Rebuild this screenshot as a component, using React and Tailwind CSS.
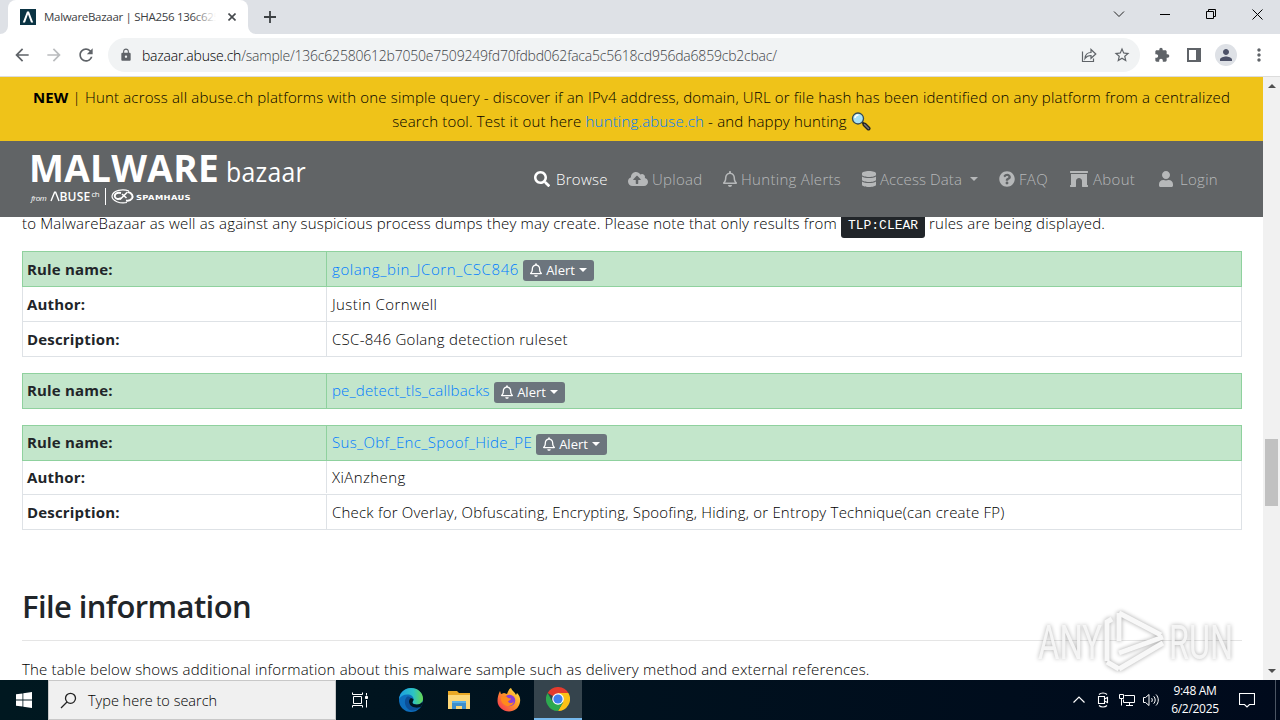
import React from "react";
import {
  FaArchway,
  FaCloudUploadAlt,
  FaDatabase,
  FaQuestionCircle,
  FaRegBell,
  FaSearch,
  FaUser,
} from "react-icons/fa";
import {
  MdArrowBack,
  MdArrowForward,
  MdExtension,
  MdLock,
  MdMoreVert,
  MdPerson,
  MdRefresh,
  MdStarBorder,
} from "react-icons/md";

const RULES = [
  {
    name: "golang_bin_JCorn_CSC846",
    nameClass: "w-[187px] tracking-[0.6px]",
    shift: "",
    rows: [
      { label: "Author:", value: "Justin Cornwell", rowClass: "h-[35px] tracking-[0.4px]" },
      { label: "Description:", value: "CSC-846 Golang detection ruleset", rowClass: "h-[35px] tracking-[0.28px]" },
    ],
  },
  { name: "pe_detect_tls_callbacks", nameClass: "w-[158px]", shift: "pb-[2px]", rows: [] },
  {
    name: "Sus_Obf_Enc_Spoof_Hide_PE",
    nameClass: "w-[200px] tracking-[0.34px]",
    shift: "pb-[2px]",
    rows: [
      { label: "Author:", value: "XiAnzheng", rowClass: "h-[34px] pb-px tracking-[0.4px]" },
      {
        label: "Description:",
        value: "Check for Overlay, Obfuscating, Encrypting, Spoofing, Hiding, or Entropy Technique(can create FP)",
        rowClass: "h-[35px] tracking-[0.21px]",
      },
    ],
  },
];

const TabStrip = () => (
  <div className="h-[34px] shrink-0 bg-[#dee1e6] flex items-end">
    <div className="relative ml-2 w-[240px] h-[34px] bg-white rounded-t-lg flex items-center pl-3">
      <svg className="absolute -left-2 bottom-0" width="8" height="8">
        <path d="M8 0v8H0a8 8 0 0 0 8-8z" fill="#fff" />
      </svg>
      <svg className="absolute -right-2 bottom-0" width="8" height="8">
        <path d="M0 0v8h8a8 8 0 0 1-8-8z" fill="#fff" />
      </svg>
      <svg width="16" height="16" viewBox="0 0 16 16" className="shrink-0">
        <rect width="16" height="16" fill="#0b3444" />
        <path d="M2.800 13.500 7 2.500h2l4.200 11h-2.200L8 5.300 5 13.500z" fill="#fff" />
      </svg>
      <div className="relative ml-2 w-[172px] h-5 leading-5 overflow-hidden whitespace-nowrap text-[11.5px] tracking-[-0.3px] text-[#3c4043]">
        MalwareBazaar | SHA256 136c625
        <div className="absolute right-0 top-0 h-full w-6 bg-linear-to-r from-white/0 to-white" />
      </div>
      <svg width="8" height="8" viewBox="0 0 8 8" className="ml-3" stroke="#45494d" strokeWidth="1.600">
        <path d="M.5.5l7 7M7.500.5l-7 7" />
      </svg>
    </div>
    <svg width="12" height="12" viewBox="0 0 12 12" className="ml-4 mb-[11px]" stroke="#3c4043" strokeWidth="1.800">
      <path d="M6 0v12M0 6h12" />
    </svg>
    <div className="ml-auto mr-[17px] mb-[14px] flex items-center" aria-hidden>
      <svg width="12" height="12" viewBox="0 0 12 12" fill="none" stroke="#222">
        <path d="M1 3.500l5 5 5-5" />
      </svg>
      <svg width="10" height="10" viewBox="0 0 10 10" className="ml-[35px]" stroke="#000">
        <path d="M0 5.500h10" />
      </svg>
      <svg width="10" height="10" viewBox="0 0 10 10" className="ml-9" fill="none" stroke="#000">
        <path d="M.5 2.500h7v7h-7zM2.500 2.500v-2h7v7h-2" />
      </svg>
      <svg width="11" height="11" viewBox="0 0 11 11" className="ml-9" stroke="#000">
        <path d="M.5.5l10 10M10.500.5l-10 10" />
      </svg>
    </div>
  </div>
);

const Toolbar = () => (
  <div className="h-[43px] shrink-0 bg-white border-b border-[#dcdcdc] flex items-center text-[#5f6368]">
    <MdArrowBack className="ml-3 w-5 h-5" />
    <MdArrowForward className="ml-3 w-5 h-5 text-[#babcbe]" />
    <MdRefresh className="ml-3 w-5 h-5" />
    <div className="ml-3 w-[1032px] h-[34px] rounded-full bg-[#f1f3f4] flex items-center">
      <MdLock className="ml-[11px] w-[14px] h-[14px]" />
      <span className="ml-[9px] w-[636px] whitespace-nowrap text-[14px] tracking-[-0.21px] font-light text-[#3f4347]">
        <span className="text-black">bazaar.abuse.ch</span>
        /sample/136c62580612b7050e7509249fd70fdbd062faca5c5618cd956da6859cb2cbac/
      </span>
      <svg width="16" height="16" viewBox="0 0 16 16" className="ml-auto" fill="none" stroke="#5f6368" strokeWidth="1.200">
        <path d="M1.500 4.500v10h11v-3" />
        <path d="M4 11.500c.3-4 2.500-6 6-6v-3l4.800 4.500L10 11.300V8.500c-3 0-4.500.8-6 3z" />
      </svg>
      <MdStarBorder className="ml-4 mr-[9px] w-[18px] h-[18px]" />
    </div>
    <MdExtension className="ml-[14px] w-4 h-4" />
    <svg width="14" height="14" viewBox="0 0 14 14" className="ml-[17px]">
      <path d="M1 1h12v12H1z" fill="none" stroke="#5f6368" strokeWidth="2" />
      <path d="M9 1h4v12H9z" fill="#5f6368" />
    </svg>
    <div className="ml-[14px] w-[22px] h-[22px] rounded-full bg-[#dee1e6] flex items-center justify-center">
      <MdPerson className="w-[18px] h-[18px] text-[#4d5268]" />
    </div>
    <MdMoreVert className="ml-3 w-5 h-5" />
  </div>
);

const Banner = () => (
  <div className="h-16 shrink-0 bg-[#efc319] pt-2 text-center text-[15px] leading-6 font-light tracking-[0.17px] text-black whitespace-nowrap">
    <div>
      <b className="font-bold">NEW</b> | Hunt across all abuse.ch platforms with one simple query - discover if an
      IPv4 address, domain, URL or file hash has been identified on any platform from a centralized
    </div>
    <div>
      search tool. Test it out here <span className="text-[#007bff]">hunting.abuse.ch</span> - and happy hunting{" "}
      <svg width="20" height="20" viewBox="0 0 20 20" className="inline-block align-[-4px]">
        <path d="M11 11l3 3" stroke="#222" strokeWidth="2" />
        <path d="M13.500 13.500l4 4" stroke="#222" strokeWidth="4" strokeLinecap="round" />
        <path d="M13.500 13.500l4 4" stroke="#777" strokeWidth="1.500" strokeLinecap="round" />
        <circle cx="7" cy="7.500" r="5.500" fill="#a9e2f5" stroke="#334a55" strokeWidth="1.300" />
        <path d="M4 7a3.500 3.500 0 0 1 3.500-3" fill="none" stroke="#fff" strokeWidth="1.500" />
      </svg>
    </div>
  </div>
);

const Logo = () => (
  <svg width="280" height="56" viewBox="0 0 280 56" className="shrink-0" fill="#fff" fontFamily="Open Sans, sans-serif">
    <text x="-1" y="31" fontSize="37.500" fontWeight="700" textLength="190" lengthAdjust="spacingAndGlyphs">
      MALWARE
    </text>
    <text x="196" y="31" fontSize="28" fontWeight="400" textLength="80" lengthAdjust="spacingAndGlyphs">
      bazaar
    </text>
    <text x="1" y="50" fontSize="8" fontStyle="italic" fontWeight="400" textLength="16">
      from
    </text>
    <path d="M21 50l3.600-8.800h1L29 50" fill="none" stroke="#fff" strokeWidth="1.400" />
    <text x="29.500" y="50" fontSize="12" fontWeight="600" textLength="31">
      BUSE
    </text>
    <text x="61.500" y="46" fontSize="8" fontWeight="400" textLength="8.500">
      ch
    </text>
    <path d="M75.500 37v17" stroke="#fff" strokeWidth="1" />
    <g fill="none" stroke="#fff">
      <path d="M99 40c-6-2.500-16-1-17 5 0 5 8 8 15 6.500" strokeWidth="1.200" />
      <path d="M91 42c-4-1-7 1-6 4 1 2.500 4 2.500 6 1M98 41c4 1 5.500 4 4 6.500-1.500 2-4 2.500-6 2" strokeWidth="2" />
      <path d="M90 48.500l3.500-3.500 4-4M92 43l4.500 4" strokeWidth="1.600" />
    </g>
    <text x="106" y="48.500" fontSize="7" fontWeight="700" fontFamily="DejaVu Sans, sans-serif" textLength="55" lengthAdjust="spacingAndGlyphs">
      SPAMHAUS
    </text>
  </svg>
);

const Caret = () => (
  <span className="inline-block border-x-4 border-t-4 border-x-transparent border-t-current" />
);

const NavItem = ({ icon: Icon, iconClass, className, children }) => (
  <div className={`flex items-center whitespace-nowrap shrink-0 ${className}`}>
    <Icon className={`shrink-0 ${iconClass}`} />
    {children}
  </div>
);

const Navbar = () => (
  <div className="h-[76px] shrink-0 bg-[#616466] pl-[30px] flex items-center text-[15px] font-light tracking-[0.300px] text-[#b6b8b9]">
    <Logo />
    <div className="ml-[224px] flex items-center">
      <NavItem icon={FaSearch} iconClass="w-4 h-4 mr-[6px]" className="w-[94px] text-white">Browse</NavItem>
      <NavItem icon={FaCloudUploadAlt} iconClass="w-5 h-4 mr-1" className="w-[95px]">Upload</NavItem>
      <NavItem icon={FaRegBell} iconClass="w-[14px] h-4 mr-1" className="w-[139px]">Hunting Alerts</NavItem>
      <NavItem icon={FaDatabase} iconClass="w-[14px] h-4 mr-1" className="w-[137px]">
        <span className="w-[90px] tracking-[0.1px]">Access Data</span>
        <Caret />
      </NavItem>
      <NavItem icon={FaQuestionCircle} iconClass="w-4 h-4 mr-1" className="w-[71px]">FAQ</NavItem>
      <NavItem icon={FaArchway} iconClass="w-[18px] h-4 mr-[5px]" className="w-[89px]">About</NavItem>
      <NavItem icon={FaUser} iconClass="w-[14px] h-4 mr-[7px]" className="w-[70px]">Login</NavItem>
    </div>
  </div>
);

const AlertButton = () => (
  <span className="ml-1 mt-[3px] pb-px w-[71px] h-[21px] rounded-[3px] bg-[#6c757d] text-white text-[13px] font-normal tracking-normal flex items-center justify-center">
    <FaRegBell className="w-3 h-[14px] mr-1" />
    <span className="mr-1">Alert</span>
    <Caret />
  </span>
);

const RuleTable = ({ rule }) => (
  <div className="mb-4">
    <div className="h-9 flex border border-[#8fd19e] bg-[#c3e6cb]">
      <div
        className={`w-[304px] border-r border-[#8fd19e] pl-1 flex items-center font-bold text-[#212529] ${rule.shift}`}
      >
        Rule name:
      </div>
      <div className="pl-[5px] flex items-center">
        <span className={`whitespace-nowrap text-[#007bff] ${rule.nameClass} ${rule.shift}`}>{rule.name}</span>
        <AlertButton />
      </div>
    </div>
    {rule.rows.map((row) => (
      <div key={row.label} className={`relative flex border-x border-b border-[#dee2e6] ${row.rowClass}`}>
        <div className="w-[304px] border-r border-[#dee2e6] pl-1 flex items-center font-bold tracking-[0.18px] text-[#212529]">
          {row.label}
        </div>
        <div className="pl-[5px] flex items-center whitespace-nowrap">{row.value}</div>
      </div>
    ))}
  </div>
);

const Watermark = () => (
  <svg
    width="200"
    height="70"
    viewBox="0 0 200 70"
    className="absolute left-[1036px] top-[605px] drop-shadow-[0_0_2px_rgba(0,0,0,0.35)]"
    fill="#f8f8f8"
    fillOpacity="0.9"
    fontFamily="Roboto, sans-serif"
  >
    <text x="2" y="54" fontSize="48" textLength="64" lengthAdjust="spacingAndGlyphs">
      ANY
    </text>
    <text x="133" y="54" fontSize="48" textLength="64" lengthAdjust="spacingAndGlyphs">
      RUN
    </text>
    <path d="M83 8v28M83 8l42 22M71 56V17l5-3M83 48l44-16M71 57l12 7M83 64l44-26" fill="none" stroke="#f8f8f8" strokeWidth="5" />
  </svg>
);

const Page = () => (
  <div className="flex-1 min-w-0 flex flex-col">
    <Banner />
    <Navbar />
    <div className="flex-1 min-h-0 overflow-hidden pl-[22px] pr-[21px] text-[15px] leading-6 font-light tracking-[0.175px] text-black">
      <p className="-mt-[6px] h-6 mb-4 whitespace-nowrap">
        to MalwareBazaar as well as against any suspicious process dumps they may create. Please note that only results
        from{" "}
        <span className="inline-block h-[25px] pt-px w-[84px] rounded-[3px] bg-[#212529] text-center text-[13px] text-white font-normal font-['Liberation_Mono',monospace] tracking-normal">
          TLP:CLEAR
        </span>{" "}
        rules are being displayed.
      </p>
      {RULES.map((rule) => (
        <RuleTable key={rule.name} rule={rule} />
      ))}
      <h2 className="mt-[57px] h-[38px] text-[31px] leading-[38px] font-semibold tracking-[-0.600px] text-[#212529]">
        File information
      </h2>
      <hr className="mt-[15px] mb-4 border-[#e5e5e5]" />
      <p className="whitespace-nowrap">
        The table below shows additional information about this malware sample such as delivery method and external
        references.
      </p>
    </div>
  </div>
);

const Scrollbar = () => (
  <div className="w-[17px] shrink-0 bg-[#f1f1f1] flex flex-col items-center">
    <span className="mt-[7px] border-x-4 border-b-4 border-x-transparent border-b-[#505050]" />
    <div className="mt-[351px] w-[13px] h-[67px] bg-[#c1c1c1]" />
    <span className="mt-auto mb-[7px] border-x-4 border-t-4 border-x-transparent border-t-[#505050]" />
  </div>
);

const EdgeIcon = () => (
  <svg width="24" height="24" viewBox="0 0 24 24">
    <defs>
      <linearGradient id="edgeTop" x1="0" x2="1">
        <stop offset="0" stopColor="#1b9de2" />
        <stop offset=".6" stopColor="#2cc3c5" />
        <stop offset="1" stopColor="#67d84e" />
      </linearGradient>
    </defs>
    <circle cx="12" cy="12" r="12" fill="#0d6ebd" />
    <path d="M0 11C1 4 6 0 12 0c7 0 12 5 12 10.500 0 4-3 6-6.500 6-2.500 0-4-1-4-2s1-1.500 1-3.500c0-2.500-2.500-4.500-6-4.500-4 0-7 2-8.500 4.500z" fill="url(#edgeTop)" />
    <path d="M8.500 8.500C5 11 5 17 9 21c4 3 9 1.500 12.500-2-6 2-11.500-.5-11.500-5.500 0-2 1-3 2-3.500-1-1.200-2.500-1.500-3.500-1.500z" fill="#0c4f98" />
    <path d="M14.500 11c.2 2-1.300 2.500-1 3.800.4 1.200 2.500 1.900 4.500 1.700 2-.2 4.500-1 5.500-3l.3 2.500-2.300 3C16 21 10 18.500 10 13.500c0-2 1-3 2-3.500z" fill="#001521" />
  </svg>
);

const FolderIcon = () => (
  <svg width="22" height="18" viewBox="0 0 22 18">
    <path d="M0 0h9l2 2h11v16H0z" fill="#e9a825" />
    <path d="M0 4h22v14H0z" fill="#fcd778" />
    <path d="M4 18v-8h14v8h-4v-3H8v3z" fill="#3f8fcb" />
    <path d="M4 10h14v2H4z" fill="#59b0e8" />
  </svg>
);

const FirefoxIcon = () => (
  <svg width="24" height="24" viewBox="0 0 24 24">
    <defs>
      <linearGradient id="foxBody" x1="1" y1="0" x2="0" y2="1">
        <stop offset="0" stopColor="#fff14f" />
        <stop offset=".45" stopColor="#ff9a26" />
        <stop offset="1" stopColor="#f5265c" />
      </linearGradient>
    </defs>
    <path d="M3 3l1 3 3-1 3 1c1-3 2-5 4-6 1 3 4 4 5 7l1-2c3 3 3.500 6 3 9-1 6-5.500 9.500-11 9.500S.5 19 .5 13C.5 9 1.500 6 3 3z" fill="url(#foxBody)" />
    <circle cx="12.500" cy="12.500" r="5.800" fill="#8a3fd6" />
    <path d="M4 9c3-2 6-1 7 1l3 .5c0 1.500-2.500 2-3 3 1 2 4 2 6 0-1 4-5 5.500-8.500 4S3.500 13 4 9z" fill="#ff8a1d" />
  </svg>
);

const ChromeIcon = () => (
  <svg width="24" height="24" viewBox="0 0 24 24">
    <path d="M12 12 1.600 6A12 12 0 0 1 22.400 6z" fill="#e33b2e" />
    <path d="M12 12V6h10.400A12 12 0 0 1 12 24l5.200-9z" fill="#fbc116" />
    <path d="M12 12l5.200 3L12 24A12 12 0 0 1 1.600 6l5.200 9z" fill="#2da94f" />
    <circle cx="12" cy="12" r="5.800" fill="#fff" />
    <circle cx="12" cy="12" r="4.600" fill="#3f7fee" />
  </svg>
);

const Taskbar = () => (
  <div className="h-10 shrink-0 bg-linear-to-r from-[#001820] to-[#000a1c] flex items-center text-white">
    <div className="w-12 flex justify-center">
      <svg width="16" height="16" viewBox="0 0 16 16" fill="#fff">
        <path d="M0 2.300 6.500 1.400v6.200H0zM7.300 1.300 16 0v7.600H7.300zM0 8.400h6.500v6.200L0 13.700zM7.300 8.400H16V16l-8.700-1.300z" />
      </svg>
    </div>
    <div className="w-[288px] h-10 bg-[#f0f0f0] border border-[#c8c8c8] flex items-center text-black text-[14.5px] font-light">
      <svg width="17" height="17" viewBox="0 0 17 17" className="ml-[11px]" fill="none" stroke="#222" strokeWidth="1.300">
        <circle cx="10.500" cy="6.300" r="5" />
        <path d="M7 10l-6 6" />
      </svg>
      <span className="ml-[11px] pt-[2px]">Type here to search</span>
    </div>
    <div className="w-12 flex justify-center">
      <svg width="16" height="16" viewBox="0 0 16 16" fill="none" stroke="#fff">
        <path d="M.5.500v2h10v-2M.5 15.500v-2h10v2M1.500 4.500h8v7h-8zM14.500 1v2.500M14.500 8v7.500" />
        <path d="M13.500 4.500h2v2h-2z" fill="#fff" />
      </svg>
    </div>
    <div className="w-[51px] pl-[3px] flex justify-center"><EdgeIcon /></div>
    <div className="w-12 flex justify-center"><FolderIcon /></div>
    <div className="w-[51px] flex justify-center"><FirefoxIcon /></div>
    <div className="w-12 h-10 bg-[#35444d] border-b-2 border-[#76b9ed] flex items-center justify-center">
      <ChromeIcon />
    </div>
    <div className="ml-auto flex items-center h-10">
      <svg width="12" height="8" viewBox="0 0 12 8" fill="none" stroke="#fff" strokeWidth="1.200">
        <path d="M.5 6.500 6 1l5.500 5.500" />
      </svg>
      <svg width="12" height="16" viewBox="0 0 12 16" className="ml-3" fill="none" stroke="#fff" strokeWidth="1.100">
        <path d="M1.500 4.500h6v7h-6zM7.500 7l3-1.500v5l-3-1.500M2 2.500C4 .5 8 .5 10 2.500M2 13.500c2 2 6 2 8 0" />
      </svg>
      <svg width="16" height="14" viewBox="0 0 16 14" className="ml-[10px]" fill="none" stroke="#fff">
        <path d="M5.500 2.500h10v7h-11v-3M10.500 9.500v3M7 12.500h7M.5 1.500h4v4h-4zM2.500 5.500v7" />
      </svg>
      <svg width="17" height="14" viewBox="0 0 17 14" className="ml-2" fill="none" stroke="#fff">
        <path d="M.5 4.500h2l3.500-3v11l-3.500-3h-2zM8.500 5c1 1 1 3 0 4M10.700 3.300c2 2 2 5.400 0 7.400M13 1.500c3 3 3 8 0 11" />
      </svg>
      <div className="ml-2 w-[54px] text-center text-[12px] leading-[18px] tracking-[-0.300px] whitespace-nowrap">
        <div>9:48 AM</div>
        <div>6/2/2025</div>
      </div>
      <svg width="16" height="16" viewBox="0 0 16 16" className="ml-[17px]" fill="none" stroke="#fff" strokeWidth="1.100">
        <path d="M.5 1.500h15v11h-5L8 15l-2.500-2.500h-5z" />
      </svg>
      <div className="ml-5 w-[5px] h-10 border-l border-[#4b5563]" />
    </div>
  </div>
);

const App = () => (
  <div className="relative w-[1280px] h-[720px] overflow-hidden bg-white flex flex-col font-['Open_Sans',sans-serif]">
    <TabStrip />
    <Toolbar />
    <div className="h-[603px] shrink-0 flex">
      <Page />
      <Scrollbar />
    </div>
    <Taskbar />
    <Watermark />
  </div>
);

export default App;
